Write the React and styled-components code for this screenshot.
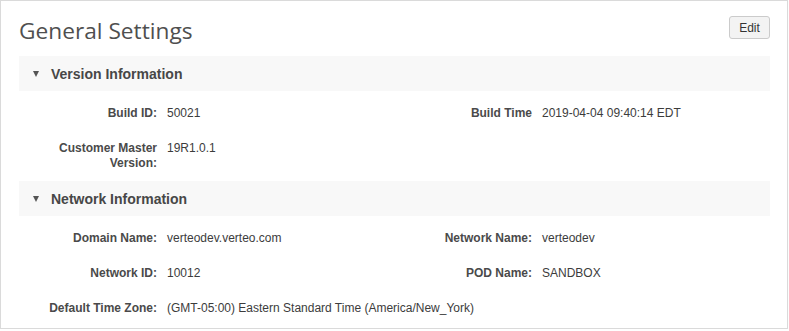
import React from 'react';
import styled, { createGlobalStyle } from 'styled-components';

const GlobalStyle = createGlobalStyle`
  html, body {
    margin: 0;
    padding: 0;
    background: #ffffff;
  }
  body {
    font-family: 'Liberation Sans', Arial, sans-serif;
  }
`;

const Panel = styled.div`
  box-sizing: border-box;
  width: 788px;
  height: 329px;
  border: 1px solid #dadada;
  box-shadow: 0 1px 1px rgba(0, 0, 0, 0.06);
  padding: 14px 17px 0 18px;
  background: #fff;
`;

const TitleRow = styled.div`
  display: flex;
  justify-content: space-between;
  align-items: flex-start;
  height: 41px;
`;

const Title = styled.h1`
  margin: 0;
  font-family: 'Open Sans', 'Liberation Sans', sans-serif;
  font-weight: 400;
  font-size: 22.7px;
  line-height: 31px;
  color: #4f4f4f;
`;

const EditButton = styled.button`
  box-sizing: border-box;
  width: 41px;
  height: 23px;
  margin-top: 1px;
  padding: 0;
  border: 1px solid #cbcbcb;
  border-radius: 3px;
  background: #f3f3f3;
  font-family: 'Liberation Sans', Arial, sans-serif;
  font-size: 12px;
  color: #333;
  cursor: pointer;
`;

const SectionHeader = styled.div`
  display: flex;
  align-items: center;
  height: 35px;
  padding-left: 14px;
  background: #f8f8f8;
  font-size: 14px;
  font-weight: bold;
  color: #474747;
`;

const Caret = styled.span`
  width: 0;
  height: 0;
  border-left: 3.5px solid transparent;
  border-right: 3.5px solid transparent;
  border-top: 6px solid #555;
  margin-right: 12px;
  margin-top: 1px;
`;

const Fields = styled.div`
  display: grid;
  grid-template-columns: 138px 217px 138px 1fr;
  column-gap: 10px;
  row-gap: 20px;
  align-items: start;
  padding: 15px 0 10px;
  font-size: 12px;
  line-height: 15px;
`;

const Label = styled.div`
  text-align: right;
  font-weight: bold;
  color: #4a4a4a;
`;

const Value = styled.div`
  color: #3c3c3c;
  grid-column: ${(p) => (p.$wide ? '2 / -1' : 'auto')};
`;

function Section({ title, children }) {
  return (
    <>
      <SectionHeader>
        <Caret />
        {title}
      </SectionHeader>
      <Fields>{children}</Fields>
    </>
  );
}

export default function App() {
  return (
    <>
      <GlobalStyle />
      <Panel>
        <TitleRow>
          <Title>General Settings</Title>
          <EditButton>Edit</EditButton>
        </TitleRow>

        <Section title="Version Information">
          <Label>Build ID:</Label>
          <Value>50021</Value>
          <Label>Build Time</Label>
          <Value>2019-04-04 09:40:14 EDT</Value>
          <Label>Customer Master Version:</Label>
          <Value>19R1.0.1</Value>
        </Section>

        <Section title="Network Information">
          <Label>Domain Name:</Label>
          <Value>verteodev.verteo.com</Value>
          <Label>Network Name:</Label>
          <Value>verteodev</Value>
          <Label>Network ID:</Label>
          <Value>10012</Value>
          <Label>POD Name:</Label>
          <Value>SANDBOX</Value>
          <Label>Default Time Zone:</Label>
          <Value $wide>(GMT-05:00) Eastern Standard Time (America/New_York)</Value>
        </Section>
      </Panel>
    </>
  );
}
